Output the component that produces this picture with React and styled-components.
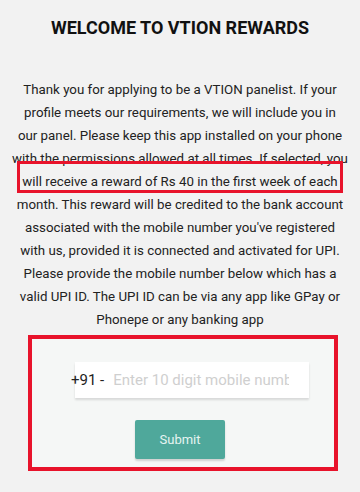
import React from 'react';
import styled, { createGlobalStyle } from 'styled-components';

const GlobalStyle = createGlobalStyle`
  html, body {
    margin: 0;
    padding: 0;
    background: #f2f2f2;
  }
  body {
    font-family: Roboto, "Liberation Sans", sans-serif;
    color: #222;
  }
`;

const Page = styled.div`
  width: 360px;
  min-height: 492px;
  display: flex;
  flex-direction: column;
  align-items: center;
`;

const Title = styled.h1`
  margin: 17px 0 0;
  font-size: 18px;
  line-height: 22px;
  font-weight: 700;
  color: #111;
  text-align: center;
`;

const TextWrap = styled.div`
  position: relative;
  align-self: stretch;
  margin-top: 39px;
  padding: 0 6px;
`;

const Intro = styled.p`
  margin: 0;
  font-size: 13.3px;
  line-height: 23px;
  text-align: center;
  color: #222;
  white-space: nowrap;
`;

const Highlight = styled.div`
  position: absolute;
  left: 17px;
  right: 17px;
  top: ${(p) => p.top}px;
  height: 32px;
  border: 3px solid #e8132b;
  box-sizing: border-box;
  pointer-events: none;
`;

const Card = styled.div`
  align-self: flex-start;
  margin: 4px 0 0 28px;
  width: 310px;
  box-sizing: border-box;
  border: 4px solid #e8132b;
  background: #f5f7f6;
  padding: 23px 0 8px;
  display: flex;
  flex-direction: column;
  align-items: center;
`;

const InputRow = styled.label`
  margin-left: 18px;
  width: 234px;
  height: 36px;
  box-sizing: border-box;
  padding-right: 20px;
  display: flex;
  align-items: center;
  background: #fff;
  box-shadow: 0 2px 2px rgba(0, 0, 0, 0.12);
`;

const Prefix = styled.span`
  font-size: 15px;
  color: #222;
  margin-right: 9px;
  margin-left: -4px;
  white-space: nowrap;
`;

const Phone = styled.input`
  flex: 1;
  min-width: 0;
  border: none;
  outline: none;
  background: transparent;
  font-family: inherit;
  font-size: 15px;
  color: #222;
  padding: 0;
  &::placeholder {
    color: #cfcfcf;
  }
`;

const SubmitButton = styled.button`
  margin-top: 22px;
  margin-right: 6px;
  width: 90px;
  height: 39px;
  border: none;
  border-radius: 2px;
  background: #4fa89b;
  color: #e6f4f1;
  font-family: inherit;
  font-size: 13px;
  box-shadow: 0 2px 2px rgba(0, 0, 0, 0.15);
`;

const lines = [
  'Thank you for applying to be a VTION panelist. If your',
  'profile meets our requirements, we will include you in',
  'our panel. Please keep this app installed on your phone',
  'with the permissions allowed at all times. If selected, you',
  'will receive a reward of Rs 40 in the first week of each',
  'month. This reward will be credited to the bank account',
  "associated with the mobile number you've registered",
  'with us, provided it is connected and activated for UPI.',
  'Please provide the mobile number below which has a',
  'valid UPI ID. The UPI ID can be via any app like GPay or',
  'Phonepe or any banking app',
];

export default function App() {
  return (
    <>
      <GlobalStyle />
      <Page>
        <Title>WELCOME TO VTION REWARDS</Title>
        <TextWrap>
          <Intro>
            {lines.map((line, i) => (
              <React.Fragment key={i}>
                {line}
                {i < lines.length - 1 && <br />}
              </React.Fragment>
            ))}
          </Intro>
          <Highlight top={83} />
        </TextWrap>
        <Card>
          <InputRow>
            <Prefix>+91 -</Prefix>
            <Phone placeholder='Enter 10 digit mobile number' />
          </InputRow>
          <SubmitButton>Submit</SubmitButton>
        </Card>
      </Page>
    </>
  );
}
